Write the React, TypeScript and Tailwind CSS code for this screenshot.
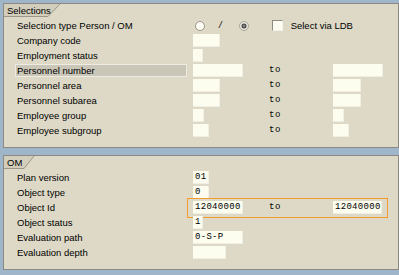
import React from "react";

const sans = "font-['Liberation_Sans',Arial,sans-serif]";
const mono = "font-['Liberation_Mono','Courier_New',monospace]";

function Tab({ label, top, bottom }: { label: string; top: number; bottom: number }) {
  return (
    <div className="relative h-[13px]">
      <svg width={top + 2} height={13} className="absolute left-0 top-0">
        <polygon points={`0,0 ${top},0 ${bottom},12.5 0,12.5`} fill="#d2cebb" />
        <line x1={top} y1={0} x2={bottom} y2={12.5} stroke="#9a978a" strokeWidth={1} />
        <line x1={0} y1={12.5} x2={bottom} y2={12.5} stroke="#9a978a" strokeWidth={1} />
      </svg>
      <span className={`absolute left-[3px] top-[0px] text-[9.5px] leading-[13px] text-black ${sans}`}>{label}</span>
    </div>
  );
}

function Field({ w, value }: { w: string; value?: string }) {
  return (
    <div
      className={`${w} h-[13px] bg-[#fcfdee] border-r border-b border-[#efefe3] pl-[2px] text-[9px] leading-[13px] tracking-[0.3px] text-black ${mono}`}
    >
      {value}
    </div>
  );
}

function Row({
  label,
  highlight,
  children,
}: {
  label: string;
  highlight?: boolean;
  children?: React.ReactNode;
}) {
  return (
    <div className="relative flex h-[15px] items-center">
      <div
        className={`ml-[11px] w-[172px] h-[13px] pl-[1px] text-[9.5px] leading-[12px] text-black ${sans} ${
          highlight ? "bg-[#cac7b9] border border-[#eeece2]" : "border border-transparent"
        }`}
      >
        {label}
      </div>
      <div className="ml-[6px] flex items-center">{children}</div>
    </div>
  );
}

function RangeRow({ label, w, to, highlight }: { label: string; w: string; to: string; highlight?: boolean }) {
  return (
    <Row label={label} highlight={highlight}>
      <div className="w-[76px]">
        <Field w={w} />
      </div>
      <div className={`w-[64px] text-[9px] leading-[13px] tracking-[0.5px] text-black ${mono}`}>to</div>
      <Field w={to} />
    </Row>
  );
}

export default function App() {
  return (
    <div className={`w-[399px] h-[275px] overflow-hidden bg-[#9fb6ca] pt-[3px] ${sans}`}>
      {/* Selections */}
      <div className="ml-[3px] border border-[#8a8a82] bg-[#ddd9c6] pt-0 pb-[9px]">
        <Tab label="Selections" top={56} bottom={44} />
        <div className="mt-[1px]">
          <Row label="Selection type Person / OM">
            <svg width={10} height={10} className="ml-[2px]">
              <circle cx={5} cy={5} r={4.5} fill="#fdfdf6" stroke="#9a978c" />
            </svg>
            <span className="ml-[14px] text-[9.5px] italic text-black">/</span>
            <svg width={10} height={10} className="ml-[17px]">
              <circle cx={5} cy={5} r={4.5} fill="#e6e4da" stroke="#a9a69b" />
              <circle cx={5} cy={5} r={2.5} fill="#4a4a4a" />
              <circle cx={5} cy={5} r={1.2} fill="#8a8a8a" />
            </svg>
            <div className="ml-[23px] w-[11px] h-[11px] bg-[#fcfdf0] border border-t-[#8e8b80] border-l-[#8e8b80] border-r-[#f4f3ea] border-b-[#f4f3ea]" />
            <span className="ml-[8px] text-[9.5px] leading-[12px] text-black">Select via LDB</span>
          </Row>
          <Row label="Company code">
            <Field w="w-[27px]" />
          </Row>
          <Row label="Employment status">
            <Field w="w-[10px]" />
          </Row>
          <RangeRow label="Personnel number" w="w-[50px]" to="w-[50px]" highlight />
          <RangeRow label="Personnel area" w="w-[27px]" to="w-[28px]" />
          <RangeRow label="Personnel subarea" w="w-[27px]" to="w-[28px]" />
          <RangeRow label="Employee group" w="w-[11px]" to="w-[11px]" />
          <RangeRow label="Employee subgroup" w="w-[16px]" to="w-[16px]" />
        </div>
      </div>

      {/* OM */}
      <div className="mt-[7px] ml-[3px] border border-[#8a8a82] bg-[#ddd9c6] pb-[9px]">
        <Tab label="OM" top={30} bottom={20} />
        <div className="mt-[1px]">
          <Row label="Plan version">
            <Field w="w-[16px]" value="01" />
          </Row>
          <Row label="Object type">
            <Field w="w-[16px]" value="0" />
          </Row>
          <Row label="Object Id">
            <div className="w-[76px]">
              <Field w="w-[50px]" value="12040000" />
            </div>
            <div className={`w-[64px] text-[9px] leading-[13px] tracking-[0.5px] text-black ${mono}`}>to</div>
            <Field w="w-[49px]" value="12040000" />
            <div className="absolute left-[183px] top-[-2px] w-[201px] h-[20px] border-[1.5px] border-[#f39b2e]" />
          </Row>
          <Row label="Object status">
            <Field w="w-[10px]" value="1" />
          </Row>
          <Row label="Evaluation path">
            <Field w="w-[50px]" value="0-S-P" />
          </Row>
          <Row label="Evaluation depth">
            <Field w="w-[33px]" />
          </Row>
        </div>
      </div>
    </div>
  );
}
